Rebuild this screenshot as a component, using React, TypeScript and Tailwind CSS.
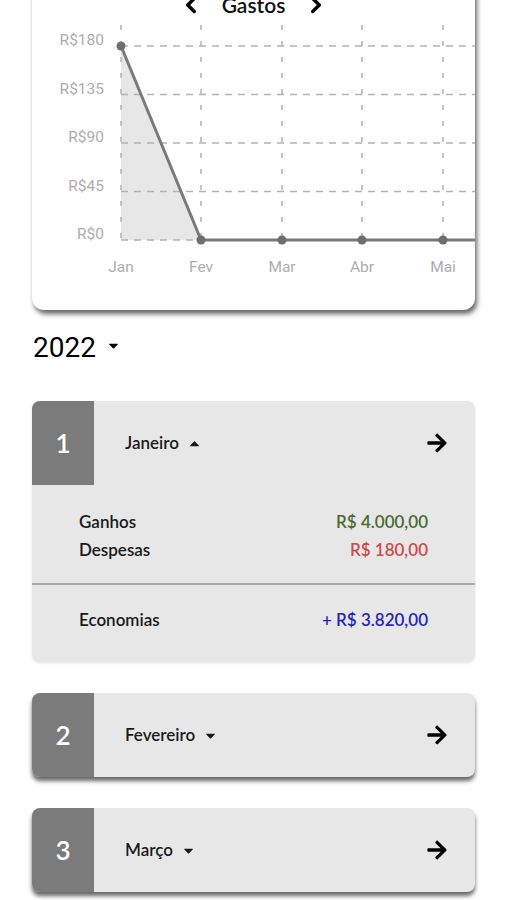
import { FC } from "react";
import { FaArrowRight, FaCaretDown, FaCaretUp } from "react-icons/fa";
import { ChevronLeft, ChevronRight } from "lucide-react";

const xs = [89, 169, 250, 330, 411];
const ys = [26, 74.5, 123, 171.5, 220];
const yLabels = ["R$180", "R$135", "R$90", "R$45", "R$0"];
const xLabels = ["Jan", "Fev", "Mar", "Abr", "Mai"];

const Chart: FC = () => (
  <svg width="444" height="290" className="block font-['Roboto',sans-serif]">
    <polygon points="89,26 169,220 89,220" fill="#e7e7e7" />
    {ys.map((y) => (
      <line key={y} x1={89} x2={444} y1={y} y2={y} stroke="#b3b3b3" strokeWidth="1.5" strokeDasharray="7 6" />
    ))}
    {xs.map((x) => (
      <line key={x} x1={x} x2={x} y1={5} y2={220} stroke="#b3b3b3" strokeWidth="1.5" strokeDasharray="5 11" />
    ))}
    {ys.map((y, i) => (
      <text key={i} x={72} y={y - 5} textAnchor="end" dominantBaseline="middle" fontSize="15.5" fill="#adadad">
        {yLabels[i]}
      </text>
    ))}
    {xs.map((x, i) => (
      <text key={i} x={x} y={248} textAnchor="middle" dominantBaseline="middle" fontSize="15.5" fill="#adadad">
        {xLabels[i]}
      </text>
    ))}
    <polyline points="89,26 169,220 444,220" fill="none" stroke="#7a7a7a" strokeWidth="3" strokeLinejoin="round" />
    {[26, 220, 220, 220, 220].map((y, i) => (
      <circle key={i} cx={xs[i]} cy={y} r="4.5" fill="#6e6e6e" />
    ))}
  </svg>
);

type MonthProps = { n: number; name: string; open?: boolean };

const MonthHeader: FC<MonthProps> = ({ n, name, open }) => (
  <div className="flex h-[84px] items-center">
    <div className="flex h-full w-[62px] items-center justify-center bg-[#7b7b7b] text-[26px] font-semibold text-white">
      {n}
    </div>
    <div className="flex flex-1 items-center pl-[31px] text-[17px] font-semibold text-[#1a1a1a]">
      {name}
      <span className="ml-[8px]">{open ? <FaCaretUp size={15} /> : <FaCaretDown size={15} />}</span>
    </div>
    <FaArrowRight size={22} className="mr-[27px] text-black" />
  </div>
);

const App: FC = () => {
  return (
    <div className="min-h-[900px] overflow-hidden bg-white font-['Lato',sans-serif]">
      <div className="mx-[32px] -mt-[20px] overflow-hidden rounded-b-xl bg-white shadow-[2px_4px_5px_rgba(0,0,0,0.6)]">
        <div className="flex h-[40px] items-center justify-center gap-[18px] pt-[10px]">
          <ChevronLeft size={26} strokeWidth={3.2} className="text-black" />
          <span className="text-[21px] font-semibold text-[#111]">Gastos</span>
          <ChevronRight size={26} strokeWidth={3.2} className="text-black" />
        </div>
        <Chart />
      </div>

      <div className="mx-[33px] mt-[20px] flex h-[36px] items-center font-['Roboto',sans-serif] text-[28px] text-black">
        2022
        <FaCaretDown size={15} className="ml-[10px] -mt-[6px]" />
      </div>

      <div className="mx-[32px] mt-[35px] flex flex-col gap-[31px]">
        <div className="overflow-hidden rounded-lg bg-[#e7e7e7] shadow-[0_1px_3px_rgba(0,0,0,0.12)]">
          <MonthHeader n={1} name="Janeiro" open />
          <div className="px-[47px] pt-[23px] pb-[19px] text-[17px] font-semibold">
            <div className="flex h-[28px] items-center justify-between">
              <span className="text-[#1a1a1a]">Ganhos</span>
              <span className="text-[#4b6b34]">R$ 4.000,00</span>
            </div>
            <div className="flex h-[28px] items-center justify-between">
              <span className="text-[#1a1a1a]">Despesas</span>
              <span className="text-[#cf4a4a]">R$ 180,00</span>
            </div>
          </div>
          <div className="h-[2px] bg-[#ababab]" />
          <div className="mt-[21px] mb-[28px] flex h-[28px] items-center justify-between px-[47px] text-[17px] font-semibold">
            <span className="text-[#1a1a1a]">Economias</span>
            <span className="text-[#2626b5]">+ R$ 3.820,00</span>
          </div>
        </div>

        <div className="overflow-hidden rounded-lg bg-[#e7e7e7] shadow-[0_4px_4px_rgba(0,0,0,0.6)]">
          <MonthHeader n={2} name="Fevereiro" />
        </div>

        <div className="overflow-hidden rounded-lg bg-[#e7e7e7] shadow-[0_4px_4px_rgba(0,0,0,0.6)]">
          <MonthHeader n={3} name="Março" />
        </div>
      </div>
    </div>
  );
};

export default App;
